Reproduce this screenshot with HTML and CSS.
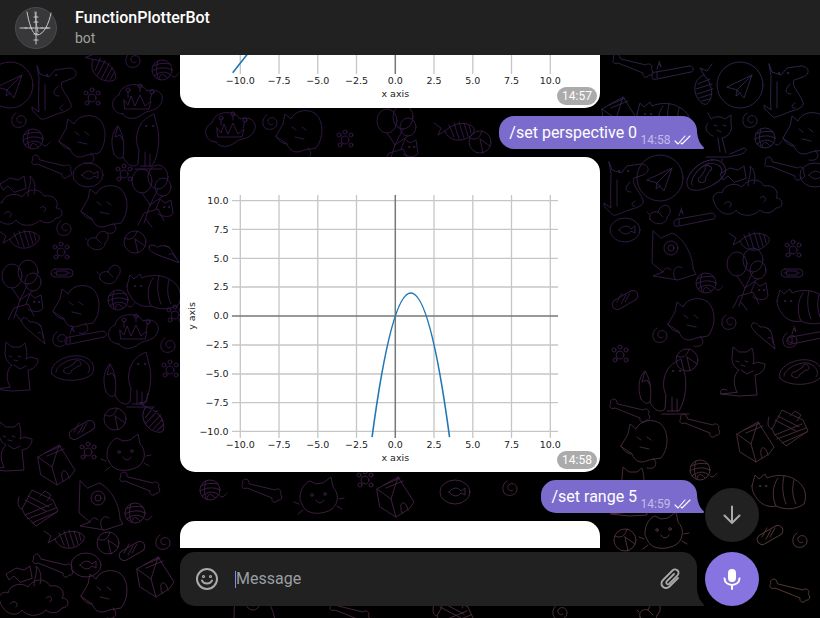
FILE: index.html
```html
<!DOCTYPE html>
<html lang="en">
<head>
<meta charset="utf-8">
<title>FunctionPlotterBot</title>
<link rel="stylesheet" href="styles.css">
</head>
<body>
<div class="wallpaper">
<svg class="doodles" width="820" height="618" viewBox="0 0 820 618" fill="none" stroke="#fff" stroke-width=".9" stroke-linecap="round" stroke-linejoin="round" shape-rendering="crispEdges">
<defs>
<g id="plane"><circle r="23"/><path d="M-13 2 12-10 4 13-3 5ZM-3 5 12-10M-3 5-4 11 0 8"/></g>
<g id="dog"><path d="M-16-24-13-16-4-13 2-20 16-22C24-22 26-14 18-11L9-8C6-2 14 4 18 14 20 20 10 22 4 24-4 27-9 30-12 29-14 26-22 22-21 17L-14 22C-15 10-14-4-14-12ZM5-4C-1 2 0 6 6 6M10 15C6 17 6 21 10 20M-8-6V20"/><circle cx="-6" cy="-15" r=".7"/><circle cx="3" cy="-15" r=".7"/></g>
<g id="paw"><circle r="4"/><circle cx="-6" cy="-5" r="2"/><circle cx="0" cy="-8" r="2"/><circle cx="6" cy="-5" r="2"/><circle cx="-5" cy="5" r="2"/><circle cx="6" cy="5" r="2"/></g>
<g id="fishbone"><path d="M-21-7-14-2-17 5-10 1C0-8 12-9 19-2 21 2 14 9 6 10-2 11-8 7-10 1M-6-5-1 7M-1-7 4 9M4-8 9 8M9-7 13 6M14-5 16 3"/></g>
<g id="swirl"><path d="M3 2C1 4-3 2-2-2 0-6 7-5 7 1 7 7-1 9-5 6-9 2-7-5-3-7"/></g>
<g id="yarn"><circle r="10"/><path d="M-9-4C-3-7 3-7 8-6M-10 1C-3-3 4-3 10 0M-8 6C-2 1 4 1 9 5M-3 9C-2 4 0 2 5 8M-4-9C-6-3-6 2-4 8M10 6C13 9 15 5 17 3"/></g>
<g id="crown"><path d="M-14 14C-26 14-28-1-18-5-16-17 4-19 10-9 20-13 30-5 23 5 18 12 10 10 6 14-2 20-10 20-14 14ZM-12 9H12L14 1 8 6 3-5-2 6-6-4-9 5-13 0ZM-9-3-9-9M3-8V-13M13 0 15-7"/><circle cx="-9" cy="-10" r="2"/><circle cx="3" cy="-14" r="2"/><circle cx="15" cy="-8" r="2"/></g>
<g id="fox"><path d="M-24 14C-28 2-26-8-20-14-15-6-13 4-15 17-11 26-4 28 0 24L1 10C-3 2-2-8 3-16 7-22 12-24 16-26L19-14C22-5 21 10 17 20L14 26H2M-15 17C-18 20-21 18-24 14M-20-14-23-3-18-5-15 0M7 26V12M12 26V14M-3 29H24"/><circle cx="8" cy="-14" r=".7"/><circle cx="15" cy="-14" r=".7"/></g>
<g id="curl"><path d="M-24 6-17-6-15-16-9-11C-5-20 8-22 16-16 24-8 24 8 16 18L4 20C-4 24-10 22-13 14ZM-13 14C-18 14-22 10-24 6M-8-3-4 0M2-3 6 0M-5 7 4 9M8 18C14 24 10 30 2 28"/></g>
<g id="bone"><path d="M-14-10C-17-13-21-9-19-6-22-4-19 0-15-2L10 8C9 12 14 14 16 10 20 11 21 6 18 4 21 1 16-3 13 0L-12-6Z"/></g>
<g id="fishoval"><ellipse rx="15" ry="12"/><path d="M-6 0C-2-5 3-5 6-1L10-4V3L6 1C3 5-2 5-6 0Z"/></g>
<g id="balloons"><ellipse cx="-8" cy="-14" rx="10" ry="12"/><ellipse cx="8" cy="-18" rx="10" ry="12"/><ellipse cx="13" cy="-8" rx="8" ry="9"/><path d="M-8-2 0 10M8-6 0 10M13 1 0 10M0 10-6 28M-12 30-6 18 8 14 14 26M-4 24 2 32"/><path d="M6 14 10 4 15 8 21 5 23 18C21 23 13 22 8 19"/><circle cx="14" cy="12" r=".7"/><circle cx="19" cy="12" r=".7"/></g>
<g id="ball"><circle r="11"/><path d="M-10-4C-4-1 0-4 2-11M0-3 3 11M0-3 10 4"/></g>
<g id="collar"><rect x="-11" y="-4" width="22" height="8" rx="4"/><path d="M-5-2H5V2H-5ZM-8 0H-6M6 0H8"/></g>
<g id="bird"><path d="M-10 4C-12-3-5-4-2-3 0-9 5-11 8-9 12-6 10 0 7 2 7 9-4 12-10 4ZM-2-3 3 2M-11-1-13-3"/></g>
<g id="fatcat"><path d="M-28-4-25-15-21-11-15-16-13-12C-4-16 8-15 14-11 24-6 28 4 24 14 16 20 4 20-4 16-12 18-20 14-24 7-27 3-28 0-28-4ZM-4 16C-8 8-8-4-2-12M4-14C2-6 2 4 6 14M14-10C12-2 12 6 16 14"/><circle cx="-20" cy="-4" r=".7"/><circle cx="-14" cy="-4" r=".7"/></g>
<g id="cathead"><path d="M-20 5C-21-6-14-13-10-14L-4-11 3-12 11-18 13-8C19-2 19 8 12 14 3 20-11 20-16 13ZM-21 9-26 7M-17 15-22 19M19 4 24 3M17 11 22 14M-4 5C-2 9 2 9 4 5"/><circle cx="-8" cy="0" r="1.3"/><circle cx="5" cy="-1" r="1.3"/></g>
<g id="house"><path d="M-18-6 3-18 19 7 14 14 1 22-15 12ZM-18-6-4 4 1 22M-4 4 3-18M-11-10 5-17M-9-7 8-14M7 18C3 8 9 4 12 12L13 15"/></g>
<g id="crate"><path d="M-21-8C-23-2-22 3-18 4L-8-15 13-5 18 6-4 21-15 10-18 4M-15-5 6 6M-12-9 9 2M-15 10 12 -1M-13 14 16 3M-8 18 17 7M0-9 5-14 11-10 7-4"/></g>
<g id="eyecat"><path d="M-15-24-16 8-5 17-15 21 10 25 22 21 28 19 25 14C25 0 15-18 4-22L-7-17ZM-5 17C-3 12 0 12 3 15M8 25C2 18 8 8 14 13"/><circle cx="3" cy="-7" r="7"/><circle cx="3" cy="-7" r="3"/></g>
<g id="plate"><path d="M-20 6C-24-4-6-14 8-12 20-10 24-2 20 6 10 15-14 14-20 6ZM-16 4C-16-2-4-10 8-9 16-6 20 0 16 5M-8 4C-9 1-7-1-5 0L3-5C2-8 7-9 8-6 10-5 9-1 6-2L-1 3C0 6-6 7-8 4Z"/></g>
<g id="mouse"><path d="M-12-12C-16-9-12-6-9-2L10 14 7 0C6-6 0-9-5-8-7-11-10-13-12-12ZM2-7 6-4M3 3C6 1 8 4 8 8"/></g>
<g id="sitcat"><path d="M-24 24-6 26 12 25 10 5C16 4 20 0 20-6L12-8 8-6C10-12 8-18 7-22L2-18-6-18-12-23-13-12C-13-6-10-2-6 0-12 5-12 15-8 22ZM-24 24C-26 20-22 18-18 20M-4 0 2 4 8 1M-9-9-6-8M0-9 3-8M-4-5 0-4"/></g>
<g id="cloudcat"><path d="M-38 12C-42 6-34 0-30 3-28-6-16-8-10-3-4-12 8-12 12-4 22-6 28 2 24 8 32 8 32 18 24 18 20 24 12 24 8 20 0 28-12 26-16 20-22 28-34 24-38 12ZM-18-8-24-14-29-10-32-16-22-22-14-20-8-24-6-12ZM-4-4C-4-12 0-18-2-24 3-20 4-12 2-6M-28 14C-24 9-18 13-22 17M8 8C12 4 16 9 12 12"/></g>
<g id="candle"><path d="M-22 4C-25 0-22-3-19-3L15-9C19-9 19-3 16-3L-18 4ZM-18-3-18 3M-18-6-16-12-14-8-16-14"/></g>
<g id="skate"><path d="M-14-22-11-16C-6-19-2-19 3-16L9-20 9-11C11-4 6 2 0 3L4 18M-4 3-2 17M-14-12C-18-8-16-2-9 1M-16 22H6L16 20C24 18 26 14 22 13L8 19M-10 24V26M0 24V26M-8-10-5-9M1-10 4-9M-5-5-1-3"/></g>
<g id="pill"><rect x="-14" y="-5" width="28" height="10" rx="5" transform="rotate(-30)"/><path d="M-8 2-3-7M-4 4 1-5M0 2 5-7"/></g>
</defs>
<use href="#plane" x="10" y="85"/><use href="#dog" x="53" y="90"/><use href="#paw" x="92" y="98"/><use href="#fishbone" x="101" y="66" transform="rotate(45 101 66)"/><use href="#swirl" x="133" y="60"/><use href="#yarn" x="162" y="70"/><use href="#crown" x="137" y="100"/><use href="#fox" x="138" y="140"/><use href="#curl" x="83" y="135"/><use href="#yarn" x="33" y="139"/><use href="#swirl" x="19" y="120"/>
<use href="#cloudcat" x="32" y="200"/><use href="#bone" x="52" y="166"/><use href="#fishoval" x="88" y="175"/><use href="#paw" x="124" y="174"/><use href="#curl" x="105" y="205"/><use href="#balloons" x="150" y="195"/><use href="#fishbone" x="20" y="238"/><use href="#swirl" x="64" y="228"/><use href="#bird" x="98" y="241"/><use href="#ball" x="135" y="242"/><use href="#mouse" x="165" y="253" transform="rotate(-20 165 253)"/><use href="#paw" x="61" y="252"/><use href="#collar" x="62" y="273"/><use href="#bird" x="110" y="275"/><use href="#fatcat" x="155" y="290"/><use href="#balloons" x="20" y="290"/><use href="#curl" x="77" y="305"/><use href="#yarn" x="118" y="300"/><use href="#mouse" x="35" y="330"/><use href="#swirl" x="60" y="339"/><use href="#candle" x="88" y="340"/><use href="#crown" x="133" y="330"/><use href="#paw" x="175" y="315"/><use href="#swirl" x="168" y="345"/><use href="#sitcat" x="18" y="365"/><use href="#plate" x="72" y="368"/><use href="#fox" x="130" y="378"/><use href="#paw" x="170" y="370"/>
<use href="#ball" x="115" y="419"/><use href="#fishbone" x="152" y="415" transform="rotate(60 152 415)"/><use href="#cathead" x="127" y="452"/><use href="#house" x="56" y="463"/><use href="#sitcat" x="12" y="445"/><use href="#bone" x="140" y="483"/><use href="#pill" x="82" y="430"/><use href="#paw" x="88" y="452"/><use href="#yarn" x="135" y="513"/><use href="#crate" x="40" y="505"/><use href="#eyecat" x="95" y="505"/><use href="#fishbone" x="65" y="538"/><use href="#ball" x="108" y="543"/><use href="#swirl" x="163" y="542"/><use href="#pill" x="132" y="551"/><use href="#bone" x="53" y="565"/><use href="#fishoval" x="86" y="565"/><use href="#house" x="155" y="575"/><use href="#curl" x="105" y="590"/><use href="#cloudcat" x="38" y="590"/>
<use href="#crown" x="230" y="128"/><use href="#curl" x="300" y="130"/><use href="#paw" x="345" y="140"/><use href="#balloons" x="395" y="135"/><use href="#fishbone" x="455" y="130"/><use href="#ball" x="480" y="142"/><use href="#swirl" x="270" y="122"/>
<use href="#yarn" x="210" y="490"/><use href="#bone" x="262" y="490"/><use href="#cathead" x="320" y="495"/><use href="#house" x="395" y="495"/><use href="#paw" x="365" y="480"/><use href="#fishoval" x="455" y="492"/><use href="#swirl" x="510" y="488"/>
<use href="#eyecat" x="250" y="610"/><use href="#bone" x="350" y="612"/><use href="#crate" x="455" y="612"/><use href="#swirl" x="560" y="612"/><use href="#bird" x="650" y="613"/>
<use href="#bone" x="633" y="65"/><use href="#candle" x="675" y="75"/><use href="#fishbone" x="705" y="85" transform="rotate(90 705 85)"/><use href="#plane" x="740" y="85"/><use href="#dog" x="785" y="88"/><use href="#house" x="620" y="115"/><use href="#fatcat" x="665" y="118"/><use href="#skate" x="722" y="135"/><use href="#swirl" x="750" y="120"/><use href="#curl" x="807" y="132"/><use href="#yarn" x="765" y="138"/><use href="#bone" x="785" y="168"/><use href="#plate" x="705" y="175" transform="rotate(-25 705 175)"/><use href="#plane" x="660" y="178"/><use href="#dog" x="625" y="186"/><use href="#cloudcat" x="752" y="190"/><use href="#fishoval" x="815" y="175"/>
<use href="#bird" x="660" y="215"/><use href="#candle" x="697" y="222"/><use href="#fishbone" x="750" y="240"/><use href="#eyecat" x="668" y="255"/><use href="#paw" x="793" y="250"/><use href="#balloons" x="745" y="278"/><use href="#collar" x="792" y="273"/><use href="#yarn" x="706" y="283"/><use href="#curl" x="692" y="318"/><use href="#swirl" x="729" y="322"/><use href="#fatcat" x="805" y="305"/><use href="#mouse" x="765" y="335"/><use href="#swirl" x="660" y="335"/><use href="#swirl" x="790" y="340"/><use href="#candle" x="810" y="340"/><use href="#sitcat" x="745" y="370"/><use href="#ball" x="687" y="360"/><use href="#fox" x="665" y="385"/><use href="#plate" x="800" y="372"/><use href="#pill" x="625" y="300"/><use href="#fishoval" x="625" y="230"/><use href="#paw" x="620" y="355"/><use href="#bone" x="630" y="410"/>
<use href="#curl" x="645" y="440"/><use href="#bone" x="700" y="425"/><use href="#house" x="755" y="440"/><use href="#crate" x="790" y="425"/><use href="#sitcat" x="635" y="490"/><use href="#ball" x="625" y="540"/><use href="#cathead" x="665" y="530"/><use href="#fatcat" x="780" y="490"/><use href="#yarn" x="700" y="470"/><use href="#pill" x="770" y="535"/><use href="#swirl" x="800" y="540"/><use href="#bone" x="790" y="590"/>
</svg>
<div class="tint"></div>
</div>

<div class="app">
  <header class="topbar">
    <svg class="avatar" width="42" height="42" viewBox="0 0 42 42" fill="none" stroke="#c8c8c8" stroke-linecap="round">
      <circle cx="21" cy="21" r="20.5" fill="#38383a" stroke="#4a4a52"/>
      <path d="M5 21H35M21 5V37" stroke-width="1"/>
      <path d="M10 21h2M15 21h2M26 21h2M31 21h2M19 10h4M19 15h4M19 27h4M19 33h4" stroke-width="1.2"/>
      <path d="M12 5C14 16 17 27 22 28 29 28 34 16 36 6" stroke-width="1"/>
      <path d="M20 5 21 15 23 25" stroke-width=".8"/>
    </svg>
    <div class="peer">
      <div class="peer-name">FunctionPlotterBot</div>
      <div class="peer-status">bot</div>
    </div>
  </header>

  <main class="chat">
    <div class="thread">
      <figure class="card card-first">
        <svg class="plot" width="420" height="315" viewBox="0 0 420 315" fill="none">
          <path class="grid" d="M60.3 38V281M99 38V281M137.8 38V281M176.5 38V281M254 38V281M292.8 38V281M331.5 38V281M370.3 38V281"/>
          <path class="axis" d="M215.3 38V281"/>
          <path class="curve" d="M52.7 279.7 66.7 262 120 190"/>
          <g class="ticks">
            <text x="60.3" y="290.5">−10.0</text><text x="99" y="290.5">−7.5</text><text x="137.8" y="290.5">−5.0</text><text x="176.5" y="290.5">−2.5</text><text x="215.3" y="290.5">0.0</text><text x="254" y="290.5">2.5</text><text x="292.8" y="290.5">5.0</text><text x="331.5" y="290.5">7.5</text><text x="370.3" y="290.5">10.0</text>
            <text x="215.3" y="304">x axis</text>
          </g>
        </svg>
        <time class="stamp">14:57</time>
      </figure>

      <div class="bubble">
        <span class="bubble-text">/set perspective 0</span>
        <span class="meta"><time>14:58</time>
          <svg class="checks" width="17" height="10" viewBox="0 0 17 10" fill="none" stroke="#fff" stroke-width="1.1" stroke-linecap="round" stroke-linejoin="round"><path d="M1 6 4 9 11 1M7 8 8 9 16 1"/></svg>
        </span>
        <svg class="tail" width="7" height="17" viewBox="0 0 7 17"><path d="M6 17H0V0c.193 2.84.876 5.767 2.05 8.782.904 2.325 2.446 4.485 4.625 6.48A1 1 0 016 17z"/></svg>
      </div>

      <figure class="card">
        <svg class="plot" width="420" height="315" viewBox="0 0 420 315" fill="none">
          <path class="grid" d="M60.3 38V281M99 38V281M137.8 38V281M176.5 38V281M254 38V281M292.8 38V281M331.5 38V281M370.3 38V281"/>
          <path class="grid" d="M52 43.7H378M52 72.3H378M52 101.3H378M52 130H378M52 188H378M52 217H378M52 245.7H378M52 274.3H378"/>
          <path class="axis" d="M215.3 38V281M52 159H378"/>
          <path class="curve" d="M192.05 280.07Q230.8-8.2 269.55 280.07"/>
          <g class="ticks">
            <text x="60.3" y="290.5">−10.0</text><text x="99" y="290.5">−7.5</text><text x="137.8" y="290.5">−5.0</text><text x="176.5" y="290.5">−2.5</text><text x="215.3" y="290.5">0.0</text><text x="254" y="290.5">2.5</text><text x="292.8" y="290.5">5.0</text><text x="331.5" y="290.5">7.5</text><text x="370.3" y="290.5">10.0</text>
            <text x="215.3" y="304">x axis</text>
          </g>
          <g class="ticks ticks-y">
            <text x="48.500" y="47">10.0</text><text x="48.500" y="75.600">7.5</text><text x="48.500" y="104.600">5.0</text><text x="48.500" y="133.300">2.5</text><text x="48.500" y="162.300">0.0</text><text x="48.500" y="191.300">−2.5</text><text x="48.500" y="220.300">−5.0</text><text x="48.500" y="249">−7.5</text><text x="48.500" y="277.600">−10.0</text>
          </g>
          <text class="ticks ylabel" transform="translate(15 159) rotate(-90)">y axis</text>
        </svg>
        <time class="stamp">14:58</time>
      </figure>

      <div class="bubble">
        <span class="bubble-text">/set range 5</span>
        <span class="meta"><time>14:59</time>
          <svg class="checks" width="17" height="10" viewBox="0 0 17 10" fill="none" stroke="#fff" stroke-width="1.1" stroke-linecap="round" stroke-linejoin="round"><path d="M1 6 4 9 11 1M7 8 8 9 16 1"/></svg>
        </span>
        <svg class="tail" width="7" height="17" viewBox="0 0 7 17"><path d="M6 17H0V0c.193 2.84.876 5.767 2.05 8.782.904 2.325 2.446 4.485 4.625 6.48A1 1 0 016 17z"/></svg>
      </div>

      <figure class="card card-last"></figure>
    </div>
  </main>

  <button class="round scroll-down" aria-label="Scroll down">
    <svg width="24" height="24" viewBox="0 0 24 24" fill="none" stroke="#aaa" stroke-width="2" stroke-linecap="round" stroke-linejoin="round"><path d="M12 3.500V20M4.500 12.500 12 20l7.500-7.500"/></svg>
  </button>

  <footer class="composer">
    <div class="input">
      <svg class="icon" width="24" height="24" viewBox="0 0 24 24" fill="none" stroke="#aaa" stroke-width="2" stroke-linecap="round"><circle cx="12" cy="12" r="10"/><path d="M7 13.500C8.500 17.500 15.500 17.500 17 13.500"/><circle cx="8.500" cy="9.500" r=".6"/><circle cx="15.500" cy="9.500" r=".6"/></svg>
      <div class="field"><span class="caret"></span><span class="placeholder">Message</span></div>
      <svg class="icon" width="24" height="24" viewBox="0 0 24 24" fill="none" stroke="#aaa" stroke-width="1.8" stroke-linecap="round"><path d="M20 11 11.500 19.500C8.500 22.500 3 20.500 3.500 16 3.700 14.500 4.500 13.500 5.500 12.500L14.500 3.500C16.500 1.500 20 2.500 20.500 5 20.800 6.500 20.300 7.500 19.500 8.500L11 17C9.500 18 7.500 16.500 8.500 14.500L16 7"/></svg>
      <svg class="tail tail-input" width="7" height="17" viewBox="0 0 7 17"><path d="M6 17H0V0c.193 2.84.876 5.767 2.05 8.782.904 2.325 2.446 4.485 4.625 6.48A1 1 0 016 17z"/></svg>
    </div>
    <button class="round mic" aria-label="Record voice message">
      <svg width="24" height="24" viewBox="0 0 24 24" fill="none" stroke="#fff" stroke-linecap="round"><rect x="8" y="2" width="8" height="13" rx="4" fill="#fff" stroke="none"/><path d="M4.500 11.500C5 20 19 20 19.500 11.500M12 18V22" stroke-width="2"/></svg>
    </button>
  </footer>
</div>
</body>
</html>
```

FILE: styles.css
```css
* { box-sizing: border-box; }

html, body {
  margin: 0;
  height: 100%;
  overflow: hidden;
  background: #000;
  font-family: Roboto, "Liberation Sans", sans-serif;
}

.wallpaper {
  position: absolute;
  inset: 0;
  isolation: isolate;
  background: #000;
}

.doodles { display: block; }

.tint {
  position: absolute;
  inset: 0;
  mix-blend-mode: multiply;
  background:
    radial-gradient(520px 340px at 100% 100%, #5e4232 0%, rgba(94, 66, 50, 0) 100%),
    radial-gradient(480px 340px at 100% 0%, #2f2b52 0%, rgba(47, 43, 82, 0) 100%),
    linear-gradient(180deg, #351748 0%, #351748 60%, #4a2444 100%);
}

.app {
  position: relative;
  height: 618px;
  display: flex;
  flex-direction: column;
}

.topbar {
  flex: none;
  height: 55px;
  background: #212121;
  display: flex;
  align-items: center;
  gap: 18px;
  padding-left: 15px;
}

.avatar { display: block; flex: none; }

.peer { display: flex; flex-direction: column; gap: 1px; margin-top: -1px; }

.peer-name {
  color: #fff;
  font-size: 16px;
  font-weight: 500;
  line-height: 20px;
}

.peer-status {
  color: #a0a0a0;
  font-size: 14px;
  line-height: 18px;
}

.chat {
  flex: none;
  height: 493px;
  overflow: hidden;
  padding-left: 180px;
}

.thread {
  width: 517px;
  margin-top: -262px;
  display: flex;
  flex-direction: column;
  gap: 8px;
}

.card {
  position: relative;
  width: 420px;
  height: 315px;
  margin: 0;
  background: #fff;
  border-radius: 15px;
  overflow: hidden;
  flex: none;
}

.plot { display: block; }

.grid { stroke: #c6c6c6; stroke-width: 1.3; }
.axis { stroke: #777; stroke-width: 1.5; }
.curve { stroke: #1f77b4; stroke-width: 1.6; }

.ticks text, .ylabel {
  font-family: "DejaVu Sans", sans-serif;
  font-size: 9.5px;
  fill: #222;
  text-anchor: middle;
}

.ticks-y text { text-anchor: end; }

.stamp {
  position: absolute;
  right: 3px;
  bottom: 3px;
  height: 18px;
  padding: 0 5px;
  border-radius: 9px;
  background: rgba(0, 0, 0, .33);
  color: #fff;
  font-size: 12px;
  line-height: 18px;
}

.bubble {
  position: relative;
  align-self: flex-end;
  height: 33px;
  padding: 0 6.5px 0 10px;
  background: #7b6bcc;
  border-radius: 15px 15px 0 15px;
  display: flex;
  align-items: flex-start;
  color: #fff;
}

.bubble-text {
  font-size: 16px;
  line-height: 33px;
}

.meta {
  display: flex;
  align-items: center;
  gap: 3px;
  margin: 15px 0 0 3.500px;
  color: rgba(255, 255, 255, .55);
  font-size: 12px;
  line-height: 18px;
}

.checks { display: block; }

.tail {
  position: absolute;
  left: 100%;
  bottom: 0;
  display: block;
  margin-left: -.5px;
  fill: #7b6bcc;
}

.tail-input { fill: #212121; }

.round {
  width: 54px;
  height: 54px;
  flex: none;
  padding: 0;
  border: 0;
  border-radius: 50%;
  display: flex;
  align-items: center;
  justify-content: center;
}

.scroll-down {
  position: absolute;
  left: 705px;
  top: 488px;
  background: #212121;
}

.composer {
  flex: none;
  padding: 4px 0 12px 180px;
  display: flex;
  gap: 8px;
}

.input {
  position: relative;
  width: 517px;
  height: 54px;
  background: #212121;
  border-radius: 15px 15px 0 15px;
  display: flex;
  align-items: center;
  padding: 0 15px;
}

.field {
  flex: 1;
  margin-left: 16px;
  display: flex;
  align-items: center;
}

.caret {
  width: 1px;
  height: 17px;
  background: #8f87d8;
}

.placeholder {
  color: #9a9ea3;
  font-size: 16px;
  line-height: 20px;
}

.mic { background: #8774e1; }
```
